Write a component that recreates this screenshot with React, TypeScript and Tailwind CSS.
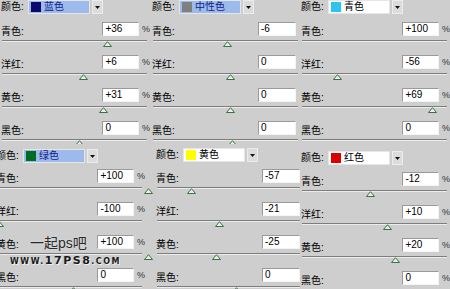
import React from "react"

type Row = { value: string; thumb?: number }

interface PanelProps {
  name: string
  swatch: string
  selected?: boolean
  pct?: boolean
  rows: Row[]
  box: string // outer clip box classes
  inner: string // offset classes
  gap: string
}

const labels = ["青色:", "洋红:", "黄色:", "黑色:"]

function Thumb({ x }: { x: number }) {
  return (
    <svg
      className="absolute top-[19px]"
      style={{ left: x - 4.5 }}
      width="9"
      height="6"
      viewBox="0 0 9 6"
    >
      <polygon points="0.5,5.5 4.5,0.7 8.5,5.5" fill="#e4f2e1" stroke="#3f6f45" strokeWidth="1" />
    </svg>
  )
}

function Panel({ name, swatch, selected, pct = true, rows, box, inner, gap }: PanelProps) {
  return (
    <div className={`${box} shrink-0 overflow-hidden`}>
      <div className={`${inner} relative w-[150px]`}>
        {/* Colour select */}
        <div className="flex items-center h-[14px]">
          <span className="w-[28px] pl-[1px] text-[10px] leading-none text-black">颜色:</span>
          <div
            className={`w-[62px] h-[14px] flex items-center pl-[2px] gap-[3px] border border-[#e6e6e6] ${
              selected ? "bg-[#9cbbec] text-[#10208a]" : "bg-white text-black"
            }`}
          >
            <span className="w-[10px] h-[10px] shrink-0" style={{ background: swatch }} />
            <span className="text-[10px] leading-none whitespace-nowrap">{name}</span>
          </div>
          <div className="ml-[2px] w-[11px] h-[14px] bg-[#dcdcdc] border border-[#ececec] flex items-center justify-center">
            <svg width="5" height="3" viewBox="0 0 5 3">
              <polygon points="0,0 5,0 2.5,3" fill="#111" />
            </svg>
          </div>
        </div>

        <div className={gap}>
          {rows.map((r, i) => (
            <div key={i} className="relative h-[33px]">
              <div className="flex h-[14px]">
                <span className="w-[107px] pl-[1px] pt-[5px] text-[10px] leading-none text-black whitespace-nowrap">
                  {labels[i]}
                </span>
                <div className="w-[38px] h-[14px] bg-white border-t border-l border-[#9a9a9a] border-r-[#f4f4f4] border-b-[#f4f4f4] border-r border-b pl-[2px] flex items-center">
                  <span className="text-[10px] leading-none text-black">{r.value}</span>
                </div>
                {pct && <span className="ml-[3px] text-[9px] leading-[14px] text-[#333]">%</span>}
              </div>
              <div className="ml-[2px] w-[145px] mt-[4px] h-[2px] border-t border-[#7d7d7d] border-b border-b-[#ececec]" />
              {r.thumb !== undefined && <Thumb x={r.thumb} />}
            </div>
          ))}
        </div>
      </div>
    </div>
  )
}

export default function App() {
  return (
    <div
      className="w-[450px] h-[289px] overflow-hidden relative bg-[#cecece] flex flex-col"
      style={{ fontFamily: '"Liberation Sans", "Noto Sans CJK SC", sans-serif' }}
    >
      <div className="flex h-[144px] shrink-0">
        <Panel
          box="w-[150px] h-[144px]"
          inner=""
          gap="mt-[8px]"
          name="蓝色"
          swatch="#0a0a6e"
          selected
          rows={[
            { value: "+36", thumb: 107 },
            { value: "+6", thumb: 83 },
            { value: "+31", thumb: 103 },
            { value: "0", thumb: 79 },
          ]}
        />
        <Panel
          box="w-[150px] h-[144px]"
          inner="ml-[1px]"
          gap="mt-[8px]"
          name="中性色"
          swatch="#7f7f7f"
          selected
          pct={false}
          rows={[
            { value: "-6", thumb: 76 },
            { value: "0", thumb: 79 },
            { value: "0", thumb: 79 },
            { value: "0", thumb: 81 },
          ]}
        />
        <Panel
          box="w-[150px] h-[144px]"
          inner=""
          gap="mt-[8px]"
          name="青色"
          swatch="#2ec4f2"
          rows={[
            { value: "+100" },
            { value: "-56", thumb: 37 },
            { value: "+69", thumb: 132 },
            { value: "0" },
          ]}
        />
      </div>

      <div className="flex h-[145px] shrink-0">
        <Panel
          box="w-[155px] h-[145px]"
          inner="ml-[-5px] mt-[5px]"
          gap="mt-[6px]"
          name="绿色"
          swatch="#006b22"
          selected
          rows={[
            { value: "+100", thumb: 153 },
            { value: "-100", thumb: 4 },
            { value: "+100", thumb: 153 },
            { value: "0", thumb: 78 },
          ]}
        />
        <Panel
          box="w-[145px] h-[145px]"
          inner="mt-[4px]"
          gap="mt-[7px]"
          name="黄色"
          swatch="#ffff00"
          pct={false}
          rows={[
            { value: "-57", thumb: 36 },
            { value: "-21", thumb: 64 },
            { value: "-25", thumb: 61 },
            { value: "0", thumb: 81 },
          ]}
        />
        <Panel
          box="w-[150px] h-[145px]"
          inner="mt-[7px]"
          gap="mt-[7px]"
          name="红色"
          swatch="#dc0000"
          rows={[
            { value: "-12", thumb: 70 },
            { value: "+10", thumb: 87 },
            { value: "+20", thumb: 95 },
            { value: "0" },
          ]}
        />
      </div>

      {/* Watermark */}
      <div className="absolute left-[30px] top-[236px] text-[14px] leading-none text-[#2a2a2a] [text-shadow:0_0_2px_#e8e8e8]">
        一起ps吧
      </div>
      <div
        className="absolute left-[10px] top-[255px] flex items-end leading-none text-[#1a1a1a] font-black [text-shadow:1px_1px_0_#f0f0f0]"
        style={{ fontFamily: '"DejaVu Sans", sans-serif' }}
      >
        <span className="text-[8px] tracking-[1.5px]">WWW.</span>
        <span className="text-[11px] tracking-[1.5px]">17PS8</span>
        <span className="text-[8px] tracking-[1.5px]">.COM</span>
      </div>
    </div>
  )
}
